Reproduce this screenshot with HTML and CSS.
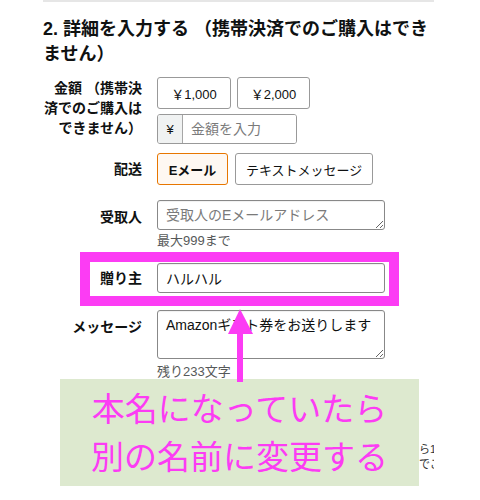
FILE: index.html
```html
<!DOCTYPE html>
<html lang="ja">
<head>
<meta charset="utf-8">
<title>詳細を入力する</title>
<link rel="stylesheet" href="styles.css">
</head>
<body>
<div class="page">
  <div class="content">
    <h2 class="heading">2. 詳細を入力する （携帯決済でのご購入はできません）</h2>

    <div class="row row-amount">
      <div class="label label-top">金額 （携帯決済でのご購入はできません）</div>
      <div class="controls">
        <div class="btn-row">
          <button class="btn amount-btn">￥1,000</button>
          <button class="btn amount-btn">￥2,000</button>
        </div>
        <div class="input-group">
          <span class="addon">¥</span>
          <input class="group-input" type="text" placeholder="金額を入力">
        </div>
      </div>
    </div>

    <div class="row row-delivery">
      <div class="label">配送</div>
      <div class="btn-row btn-row-delivery">
        <button class="btn delivery-btn selected">Eメール</button>
        <button class="btn delivery-btn">テキストメッセージ</button>
      </div>
    </div>

    <div class="row row-recipient">
      <div class="label label-pad">受取人</div>
      <div class="controls">
        <textarea class="field textarea-single" placeholder="受取人のEメールアドレス"></textarea>
        <div class="helper">最大999まで</div>
      </div>
    </div>

    <div class="row row-sender">
      <div class="label">贈り主</div>
      <input class="field input-single" type="text" value="ハルハル">
    </div>

    <div class="row row-message">
      <div class="label label-pad">メッセージ</div>
      <div class="controls">
        <textarea class="field textarea-message">Amazonギフト券をお送りします</textarea>
        <div class="helper helper-count">残り233文字</div>
      </div>
    </div>

    <div class="fine-print">
      <p class="fine-line">ら1年間有効です</p>
      <p class="fine-line">でご利用いただけます</p>
    </div>
  </div>

  <div class="highlight-frame"></div>
  <div class="note">
    <p class="note-line">本名になっていたら</p>
    <p class="note-line">別の名前に変更する</p>
  </div>
  <svg class="arrow" width="30" height="76" viewBox="226 308 30 76" aria-hidden="true">
    <polygon points="240,309 228,334 253,334" fill="#fc3cf4"/>
    <rect x="237" y="332" width="6" height="50" fill="#fc3cf4"/>
  </svg>
</div>
</body>
</html>
```

FILE: styles.css
```css
* {
  box-sizing: border-box;
}

html, body {
  margin: 0;
  padding: 0;
  background: #ffffff;
}

body {
  font-family: "Liberation Sans", "Noto Sans CJK JP", sans-serif;
  color: #0f1111;
}

.page {
  position: relative;
  width: 480px;
  height: 500px;
  overflow: hidden;
}

.content {
  margin-left: 43px;
  width: 391px;
  height: 500px;
  overflow: hidden;
  border-top: 2px solid #e6e6e6;
}

.heading {
  margin: 15px 0 0 0;
  font-size: 18px;
  line-height: 25px;
  font-weight: 700;
  color: #0f1111;
}

.row {
  display: grid;
  grid-template-columns: 99px 1fr;
  column-gap: 15px;
  align-items: center;
}

.row-amount {
  margin-top: 10px;
  align-items: start;
}

.row-delivery {
  margin-top: 9px;
}

.row-recipient {
  margin-top: 15px;
  align-items: start;
}

.row-sender {
  margin-top: 13px;
}

.row-message {
  margin-top: 17px;
  align-items: start;
}

.label {
  text-align: right;
  font-size: 14px;
  line-height: 20px;
  font-weight: 700;
  color: #0f1111;
}

.label-top {
  padding-top: 1px;
}

.label-pad {
  padding-top: 7px;
}

.controls {
  display: flex;
  flex-direction: column;
  align-items: flex-start;
}

.btn-row {
  display: flex;
  gap: 6px;
}

.btn-row-delivery {
  gap: 7px;
}

.btn {
  height: 32px;
  margin: 0;
  padding: 0 10px;
  border: 1px solid #999999;
  border-radius: 3px;
  background: #ffffff;
  font-family: "Liberation Sans", "Noto Sans CJK JP", sans-serif;
  font-size: 13px;
  color: #0f1111;
}

.amount-btn {
  width: 74px;
  padding: 0;
}

.amount-btn + .amount-btn {
  width: 73px;
}

.delivery-btn.selected {
  width: 71px;
  padding: 0;
  border-color: #e77600;
  background: #fef8f2;
  font-weight: 700;
}

.input-group {
  display: flex;
  margin-top: 5px;
  width: 140px;
  height: 30px;
  border: 1px solid #999999;
  border-radius: 3px;
  overflow: hidden;
}

.addon {
  width: 25px;
  display: flex;
  align-items: center;
  justify-content: center;
  background: #f0f2f2;
  border-right: 1px solid #a6a6a6;
  font-size: 13px;
  color: #0f1111;
}

.group-input {
  flex: 1;
  min-width: 0;
  border: none;
  outline: none;
  padding: 0 0 0 8px;
  font-family: "Liberation Sans", "Noto Sans CJK JP", sans-serif;
  font-size: 14px;
  color: #0f1111;
  background: #ffffff;
}

.field {
  display: block;
  width: 228px;
  margin: 0;
  border: 1px solid #888888;
  border-radius: 3px;
  padding: 4px 8px;
  font-family: "Liberation Sans", "Noto Sans CJK JP", sans-serif;
  font-size: 14px;
  line-height: 20px;
  color: #0f1111;
  background: #ffffff;
  box-shadow: inset 0 1px 1px rgba(0, 0, 0, 0.06);
}

.textarea-single {
  height: 30px;
  resize: vertical;
  overflow: hidden;
}

.input-single {
  height: 30px;
}

.textarea-message {
  height: 49px;
  resize: vertical;
  overflow: hidden;
}

.group-input::placeholder,
.field::placeholder {
  color: #7a7a7a;
  opacity: 1;
}

.helper {
  margin-top: 2px;
  font-size: 13px;
  line-height: 18px;
  color: #565959;
}

.helper-count {
  margin-top: 4px;
}

.fine-print {
  margin-top: 61px;
  margin-left: 376px;
}

.fine-line {
  margin: 0;
  font-size: 11px;
  line-height: 15px;
  white-space: nowrap;
  color: #333333;
}

.highlight-frame {
  position: absolute;
  left: 80px;
  top: 252px;
  width: 319px;
  height: 54px;
  border: 10px solid #fc3cf4;
}

.note {
  position: absolute;
  left: 60px;
  top: 379px;
  width: 359px;
  height: 107px;
  padding-top: 4px;
  background: #dde9cf;
  text-align: center;
}

.note-line {
  margin: 0;
  font-family: "Noto Sans CJK JP", sans-serif;
  font-size: 33px;
  line-height: 48px;
  font-weight: 400;
  color: #fc3cf4;
}

.arrow {
  position: absolute;
  left: 226px;
  top: 308px;
}
```
